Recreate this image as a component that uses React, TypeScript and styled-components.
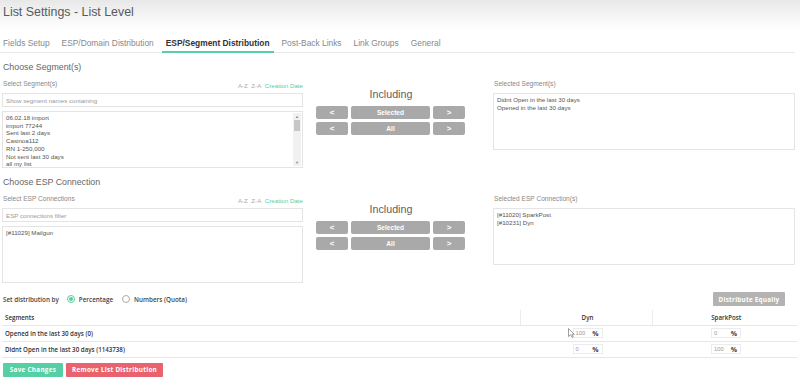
import React from 'react';
import styled, { createGlobalStyle } from 'styled-components';

const GREEN = '#55cfa3';
const RED = '#e8636d';

const Global = createGlobalStyle`
  html, body { margin: 0; padding: 0; background: #fff; }
  body { font-family: "Liberation Sans", Arial, sans-serif; color: #555; }
  * { box-sizing: border-box; }
`;

const Page = styled.div`
  width: 800px;
  height: 385px;
  overflow: hidden;
`;

const Header = styled.header`
  height: 30px;
  padding: 5px 0 0 3px;
  background: linear-gradient(#e8e8e8, #f8f8f8 20px, #fff 30px);
`;

const Title = styled.h1`
  margin: 0;
  font-size: 12.4px;
  line-height: 15px;
  font-weight: 400;
  color: #5a5a5a;
`;

const Tabs = styled.nav`
  display: flex;
  margin: 8px 5px 0 0;
  padding-left: 0;
  border-bottom: 1px solid #e8e8e8;
`;

const Tab = styled.div<{ $active?: boolean }>`
  margin: 0 4px -1px 0;
  padding: 0 4px 3px;
  font-size: 8.4px;
  line-height: 10px;
  white-space: nowrap;
  color: ${(p) => (p.$active ? '#333' : '#888')};
  font-weight: ${(p) => (p.$active ? 700 : 400)};
  border-bottom: 2px solid ${(p) => (p.$active ? GREEN : 'transparent')};
  &:first-child { margin-left: -1px; }
`;

const Content = styled.main`
  padding: 0 5px 0 2px;
`;

const Section = styled.section`
  padding-top: 9px;
`;

const SectionTitle = styled.h2`
  margin: 0 0 7px;
  font-size: 8.8px;
  line-height: 11px;
  font-weight: 400;
  color: #666;
  padding-left: 1px;
`;

const Columns = styled.div`
  display: grid;
  grid-template-columns: 301px 190px 302px;
`;

const Column = styled.div`
  display: flex;
  flex-direction: column;
`;

const LabelRow = styled.div`
  display: flex;
  justify-content: space-between;
  align-items: flex-start;
  height: 13px;
`;

const FieldLabel = styled.span`
  font-size: 6.6px;
  line-height: 8px;
  color: #888;
  padding-left: 1px;
`;

const SortLinks = styled.div`
  display: flex;
  gap: 3.5px;
  margin-top: 2px;
  font-size: 6.2px;
  line-height: 8px;
  color: #aaa;
`;

const SortLink = styled.span<{ $active?: boolean }>`
  color: ${(p) => (p.$active ? GREEN : '#aaa')};
`;

const FilterInput = styled.input`
  height: 14px;
  width: 100%;
  margin: 0;
  border: 1px solid #e4e4e4;
  padding: 0 3px;
  font-family: "Liberation Sans", Arial, sans-serif;
  font-size: 6.2px;
  color: #555;
  outline: none;
  &::placeholder { color: #9a9a9a; }
`;

const ListBox = styled.div<{ $gap: boolean }>`
  display: flex;
  margin-top: ${(p) => (p.$gap ? '4px' : '0')};
  height: 57px;
  border: 1px solid #e4e4e4;
  overflow: hidden;
`;

const ListItems = styled.ul`
  flex: 1;
  margin: 0;
  padding: 2px 3px;
  list-style: none;
  font-size: 6.2px;
  line-height: 7.7px;
  color: #555;
`;

const FakeScroll = styled.div`
  width: 8px;
  margin: 1px 1px 1px 0;
  background: #f1f1f1;
  display: flex;
  flex-direction: column;
  align-items: center;
`;

const ScrollArrow = styled.span`
  font-size: 4px;
  line-height: 7px;
  color: #888;
`;

const ScrollThumb = styled.div`
  width: 6px;
  height: 11px;
  background: #c6c6c6;
`;

const ScrollSpacer = styled.div`
  flex: 1;
`;

const Middle = styled.div`
  padding-left: 13px;
  display: flex;
  flex-direction: column;
`;

const Including = styled.div`
  width: 150px;
  margin-top: 8px;
  text-align: center;
  font-size: 10.7px;
  line-height: 13px;
  color: #606060;
`;

const MoveGrid = styled.div`
  margin-top: 5px;
  display: grid;
  grid-template-columns: 32px 79px 32px;
  grid-auto-rows: 13px;
  gap: 3px;
`;

const MoveButton = styled.button`
  margin: 0;
  padding: 0;
  border: none;
  border-radius: 2px;
  background: #a9a9a9;
  color: #fff;
  font-family: "Liberation Sans", Arial, sans-serif;
  font-weight: 700;
  font-size: 6.6px;
  line-height: 13px;
`;

const ArrowText = styled.span`
  font-size: 8px;
  font-weight: 700;
`;

const DistRow = styled.div`
  margin-top: 9px;
  height: 14px;
  display: flex;
  justify-content: space-between;
  align-items: center;
  padding-right: 10px;
`;

const DistLeft = styled.div`
  display: flex;
  align-items: center;
  font-family: "Open Sans", "Liberation Sans", sans-serif;
  font-weight: 600;
  font-size: 6.3px;
  color: #444;
  padding-left: 1px;
`;

const RadioLabel = styled.label<{ $first?: boolean }>`
  display: flex;
  align-items: center;
  gap: 4px;
  margin-left: ${(p) => (p.$first ? '8px' : '9px')};
`;

const Radio = styled.span<{ $checked?: boolean }>`
  width: 8px;
  height: 8px;
  border-radius: 50%;
  border: 1px solid ${(p) => (p.$checked ? GREEN : '#aaa')};
  display: flex;
  align-items: center;
  justify-content: center;
  &::after {
    content: '';
    width: 4px;
    height: 4px;
    border-radius: 50%;
    background: ${(p) => (p.$checked ? GREEN : 'transparent')};
  }
`;

const GrayButton = styled.button`
  height: 14px;
  width: 72px;
  margin: 0;
  padding: 0;
  border: none;
  border-radius: 1px;
  background: #b3b3b3;
  color: #fff;
  font-family: "Open Sans", "Liberation Sans", sans-serif;
  font-weight: 700;
  font-size: 6.3px;
  letter-spacing: 0.25px;
`;

const Table = styled.table`
  margin-top: 4px;
  width: 795px;
  border-collapse: collapse;
  table-layout: fixed;
  font-family: "Open Sans", "Liberation Sans", sans-serif;
  font-size: 6.2px;
  color: #333;
`;

const Th = styled.th<{ $center?: boolean; $divider?: boolean }>`
  height: 15px;
  padding: 0 0 0 3px;
  font-weight: 600;
  text-align: ${(p) => (p.$center ? 'center' : 'left')};
  border-bottom: 1px solid #e7e7e7;
  border-left: ${(p) => (p.$divider ? '1px solid #ececec' : 'none')};
`;

const Td = styled.td<{ $center?: boolean }>`
  height: 16px;
  padding: 0 0 0 3px;
  font-weight: 600;
  text-align: ${(p) => (p.$center ? 'center' : 'left')};
  border-bottom: 1px solid #e7e7e7;
  vertical-align: middle;
`;

const CellWrap = styled.div`
  position: relative;
  display: inline-block;
  vertical-align: middle;
`;

const PercentBox = styled.div`
  width: 30px;
  height: 10px;
  border: 1px solid #ececec;
  display: flex;
  align-items: center;
  justify-content: space-between;
  padding: 0 3px 0 2px;
`;

const PercentValue = styled.span`
  font-family: "Liberation Sans", Arial, sans-serif;
  font-weight: 400;
  font-size: 5.8px;
  color: #999;
`;

const PercentSign = styled.span`
  font-weight: 700;
  font-size: 7px;
  color: #444;
`;

const Cursor = styled.svg`
  position: absolute;
  left: -5px;
  top: 0px;
  width: 7px;
  height: 10px;
`;

const Actions = styled.div`
  margin-top: 5px;
  display: flex;
  gap: 3px;
  padding-left: 1px;
`;

const ActionButton = styled.button<{ $color: string; $w: number }>`
  height: 14px;
  width: ${(p) => p.$w}px;
  margin: 0;
  padding: 0;
  border: none;
  border-radius: 1px;
  background: ${(p) => p.$color};
  color: #fff;
  font-family: "Open Sans", "Liberation Sans", sans-serif;
  font-weight: 700;
  font-size: 6.3px;
  letter-spacing: 0.3px;
`;

type ChooserProps = {
  title: string;
  label: string;
  placeholder: string;
  items: string[];
  scroll?: boolean;
  selectedLabel: string;
  selected: string[];
};

function Chooser({ title, label, placeholder, items, scroll, selectedLabel, selected }: ChooserProps) {
  return (
    <Section>
      <SectionTitle>{title}</SectionTitle>
      <Columns>
        <Column>
          <LabelRow>
            <FieldLabel>{label}</FieldLabel>
            <SortLinks>
              <SortLink>A-Z</SortLink>
              <SortLink>Z-A</SortLink>
              <SortLink $active>Creation Date</SortLink>
            </SortLinks>
          </LabelRow>
          <FilterInput placeholder={placeholder} />
          <ListBox $gap>
            <ListItems>
              {items.map((it) => (
                <li key={it}>{it}</li>
              ))}
            </ListItems>
            {scroll && (
              <FakeScroll>
                <ScrollArrow>▲</ScrollArrow>
                <ScrollThumb />
                <ScrollSpacer />
                <ScrollArrow>▼</ScrollArrow>
              </FakeScroll>
            )}
          </ListBox>
        </Column>
        <Middle>
          <Including>Including</Including>
          <MoveGrid>
            <MoveButton><ArrowText>&lt;</ArrowText></MoveButton>
            <MoveButton>Selected</MoveButton>
            <MoveButton><ArrowText>&gt;</ArrowText></MoveButton>
            <MoveButton><ArrowText>&lt;</ArrowText></MoveButton>
            <MoveButton>All</MoveButton>
            <MoveButton><ArrowText>&gt;</ArrowText></MoveButton>
          </MoveGrid>
        </Middle>
        <Column>
          <LabelRow>
            <FieldLabel>{selectedLabel}</FieldLabel>
          </LabelRow>
          <ListBox $gap={false}>
            <ListItems>
              {selected.map((it) => (
                <li key={it}>{it}</li>
              ))}
            </ListItems>
          </ListBox>
        </Column>
      </Columns>
    </Section>
  );
}

function Percent({ value, cursor }: { value: string; cursor?: boolean }) {
  return (
    <CellWrap>
      <PercentBox>
        <PercentValue>{value}</PercentValue>
        <PercentSign>%</PercentSign>
      </PercentBox>
      {cursor && (
        <Cursor viewBox="0 0 7 10">
          <path d="M0.5 0.5 L0.5 8.5 L2.5 6.8 L4 9.5 L5.2 8.9 L3.8 6.3 L6.3 6.3 Z" fill="#fff" stroke="#777" strokeWidth="0.7" />
        </Cursor>
      )}
    </CellWrap>
  );
}

export default function App() {
  return (
    <Page>
      <Global />
      <Header>
        <Title>List Settings - List Level</Title>
      </Header>
      <Tabs>
        <Tab>Fields Setup</Tab>
        <Tab>ESP/Domain Distribution</Tab>
        <Tab $active>ESP/Segment Distribution</Tab>
        <Tab>Post-Back Links</Tab>
        <Tab>Link Groups</Tab>
        <Tab>General</Tab>
      </Tabs>
      <Content>
        <Chooser
          title="Choose Segment(s)"
          label="Select Segment(s)"
          placeholder="Show segment names containing"
          items={['06.02.18 import', 'import 77244', 'Sent last 2 days', 'Casinoa112', 'RN 1-250,000', 'Not sent last 30 days', 'all my list']}
          scroll
          selectedLabel="Selected Segment(s)"
          selected={['Didnt Open in the last 30 days', 'Opened in the last 30 days']}
        />
        <Chooser
          title="Choose ESP Connection"
          label="Select ESP Connections"
          placeholder="ESP connections filter"
          items={['[#11029] Mailgun']}
          selectedLabel="Selected ESP Connection(s)"
          selected={['[#11020] SparkPost', '[#10231] Dyn']}
        />
        <DistRow>
          <DistLeft>
            <span>Set distribution by</span>
            <RadioLabel $first>
              <Radio $checked />
              Percentage
            </RadioLabel>
            <RadioLabel>
              <Radio />
              Numbers (Quota)
            </RadioLabel>
          </DistLeft>
          <GrayButton>Distribute Equally</GrayButton>
        </DistRow>
        <Table>
          <colgroup>
            <col style={{ width: 518 }} />
            <col style={{ width: 132 }} />
            <col />
          </colgroup>
          <thead>
            <tr>
              <Th>Segments</Th>
              <Th $center $divider>Dyn</Th>
              <Th $center $divider>SparkPost</Th>
            </tr>
          </thead>
          <tbody>
            <tr>
              <Td>Opened in the last 30 days (0)</Td>
              <Td $center><Percent value="100" cursor /></Td>
              <Td $center><Percent value="0" /></Td>
            </tr>
            <tr>
              <Td>Didnt Open in the last 30 days (1143738)</Td>
              <Td $center><Percent value="0" /></Td>
              <Td $center><Percent value="100" /></Td>
            </tr>
          </tbody>
        </Table>
        <Actions>
          <ActionButton $color={GREEN} $w={60}>Save Changes</ActionButton>
          <ActionButton $color={RED} $w={97}>Remove List Distribution</ActionButton>
        </Actions>
      </Content>
    </Page>
  );
}
